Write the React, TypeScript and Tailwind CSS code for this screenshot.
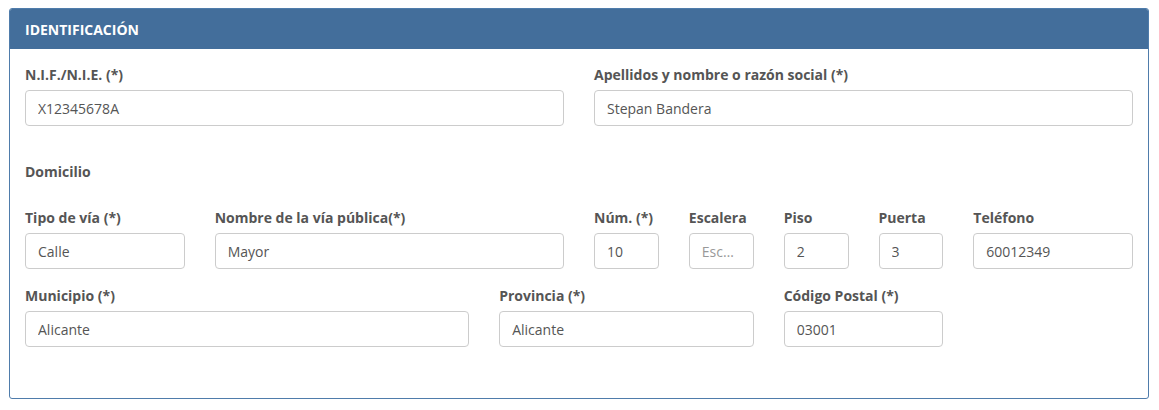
const FONT = { fontFamily: '"Open Sans", "Noto Sans", Arial, sans-serif' }

type Field = { label: string; value?: string; placeholder?: string; span: string }

const ROW_1: Field[] = [
  { label: 'N.I.F./N.I.E. (*)', value: 'X12345678A', span: 'col-span-6' },
  { label: 'Apellidos y nombre o razón social (*)', value: 'Stepan Bandera', span: 'col-span-6' },
]

const ROW_2: Field[] = [
  { label: 'Tipo de vía (*)', value: 'Calle', span: 'col-span-2' },
  { label: 'Nombre de la vía pública(*)', value: 'Mayor', span: 'col-span-4' },
  { label: 'Núm. (*)', value: '10', span: 'col-span-1' },
  { label: 'Escalera', placeholder: 'Escalera', span: 'col-span-1' },
  { label: 'Piso', value: '2', span: 'col-span-1' },
  { label: 'Puerta', value: '3', span: 'col-span-1' },
  { label: 'Teléfono', value: '60012349', span: 'col-span-2' },
]

const ROW_3: Field[] = [
  { label: 'Municipio (*)', value: 'Alicante', span: 'col-span-5' },
  { label: 'Provincia (*)', value: 'Alicante', span: 'col-span-3' },
  { label: 'Código Postal (*)', value: '03001', span: 'col-span-2' },
]

function FormField({ label, value, placeholder, span }: Field) {
  return (
    <div className={`${span} min-w-0`}>
      <label className="block h-5 mb-[5px] text-[14px] leading-5 font-bold text-[#555] whitespace-nowrap">
        {label}
      </label>
      <input
        readOnly
        defaultValue={value}
        placeholder={placeholder}
        className="block w-full h-9 px-3 text-[14px] text-[#555] placeholder:text-[#999] border border-[#ccc] rounded-[4px] bg-white outline-none text-ellipsis"
        style={FONT}
      />
    </div>
  )
}

function Row({ fields, className = '' }: { fields: Field[]; className?: string }) {
  return (
    <div className={`grid grid-cols-12 gap-x-[30px] ${className}`}>
      {fields.map((f) => <FormField key={f.label} {...f} />)}
    </div>
  )
}

export default function App() {
  return (
    <div className="bg-white min-h-[410px] pl-[9px] pr-[10px] pt-[8px]" style={FONT}>
      <div className="border border-[#4f7cab] rounded-[3px] h-[391px] overflow-hidden">
        <div className="h-[40px] bg-[#436e9b] flex items-center px-[15px]">
          <h2 className="text-[14px] font-bold text-white uppercase">Identificación</h2>
        </div>
        <div className="px-[15px] pt-[16px]">
          <Row fields={ROW_1} />
          <div className="mt-[36px] h-5 text-[14px] leading-5 font-bold text-[#555]">Domicilio</div>
          <Row fields={ROW_2} className="mt-[26px]" />
          <Row fields={ROW_3} className="mt-[17px]" />
        </div>
      </div>
    </div>
  )
}
